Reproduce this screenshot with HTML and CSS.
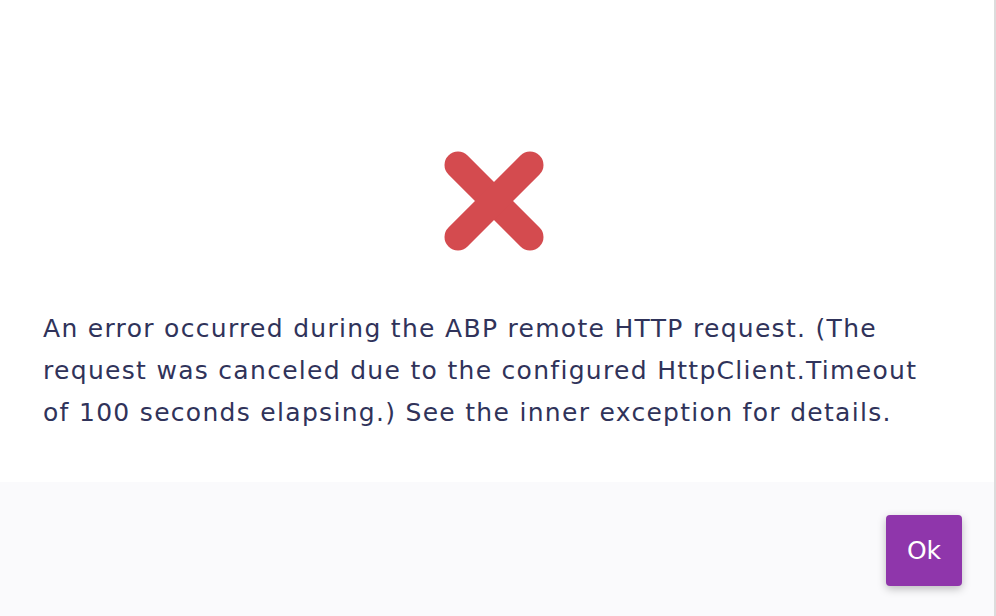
FILE: index.html
```html
<!DOCTYPE html>
<html lang="en">
<head>
  <meta charset="UTF-8" />
  <meta name="viewport" content="width=device-width, initial-scale=1.0" />
  <title>Error</title>
  <link rel="stylesheet" href="styles.css">
</head>
<body>
  <div class="dialog">
    <!-- Message -->
    <div class="dialog-body">
      <div class="dialog-icon">
        <svg width="100" height="100" viewBox="0 0 100 100">
          <line x1="14" y1="14" x2="86" y2="86" stroke="#d44b4f" stroke-width="27" stroke-linecap="round" />
          <line x1="86" y1="14" x2="14" y2="86" stroke="#d44b4f" stroke-width="27" stroke-linecap="round" />
        </svg>
      </div>
      <p class="dialog-text">An error occurred during the ABP remote HTTP request. (The request was canceled due to the configured HttpClient.Timeout of 100 seconds elapsing.) See the inner exception for details.</p>
    </div>

    <!-- Actions -->
    <div class="dialog-footer">
      <button class="btn-ok">Ok</button>
    </div>
  </div>
</body>
</html>
```

FILE: styles.css
```css
:root {
  --text-dark: #30335a;
  --purple: #8f36ab;
  --footer-bg: #fafafc;
  --edge: #dcdcdc;
}

* {
  box-sizing: border-box;
}

body {
  margin: 0;
  font-family: 'DejaVu Sans', 'Liberation Sans', sans-serif;
  background: #fff;
}

.dialog {
  width: 996px;
  height: 616px;
  display: flex;
  flex-direction: column;
  border-right: 2px solid var(--edge);
}

.dialog-body {
  height: 482px;
  padding: 151px 56px 0 43px;
  background: #fff;
}

.dialog-icon {
  display: flex;
  justify-content: center;
  padding-left: 7px;
}

.dialog-icon svg {
  display: block;
}

.dialog-text {
  margin: 57px 0 0;
  font-size: 25px;
  line-height: 42px;
  letter-spacing: 1.3px;
  color: var(--text-dark);
}

.dialog-footer {
  flex: 1;
  background: var(--footer-bg);
  display: flex;
  justify-content: flex-end;
  align-items: flex-start;
  padding: 33px 32px 0 0;
}

.btn-ok {
  width: 76px;
  height: 71px;
  border: none;
  border-radius: 4px;
  background: var(--purple);
  color: #fff;
  font-family: inherit;
  font-size: 25px;
  cursor: pointer;
  box-shadow: 0 3px 8px rgba(0, 0, 0, 0.25);
}

.btn-ok:focus {
  outline: none;
}
```
